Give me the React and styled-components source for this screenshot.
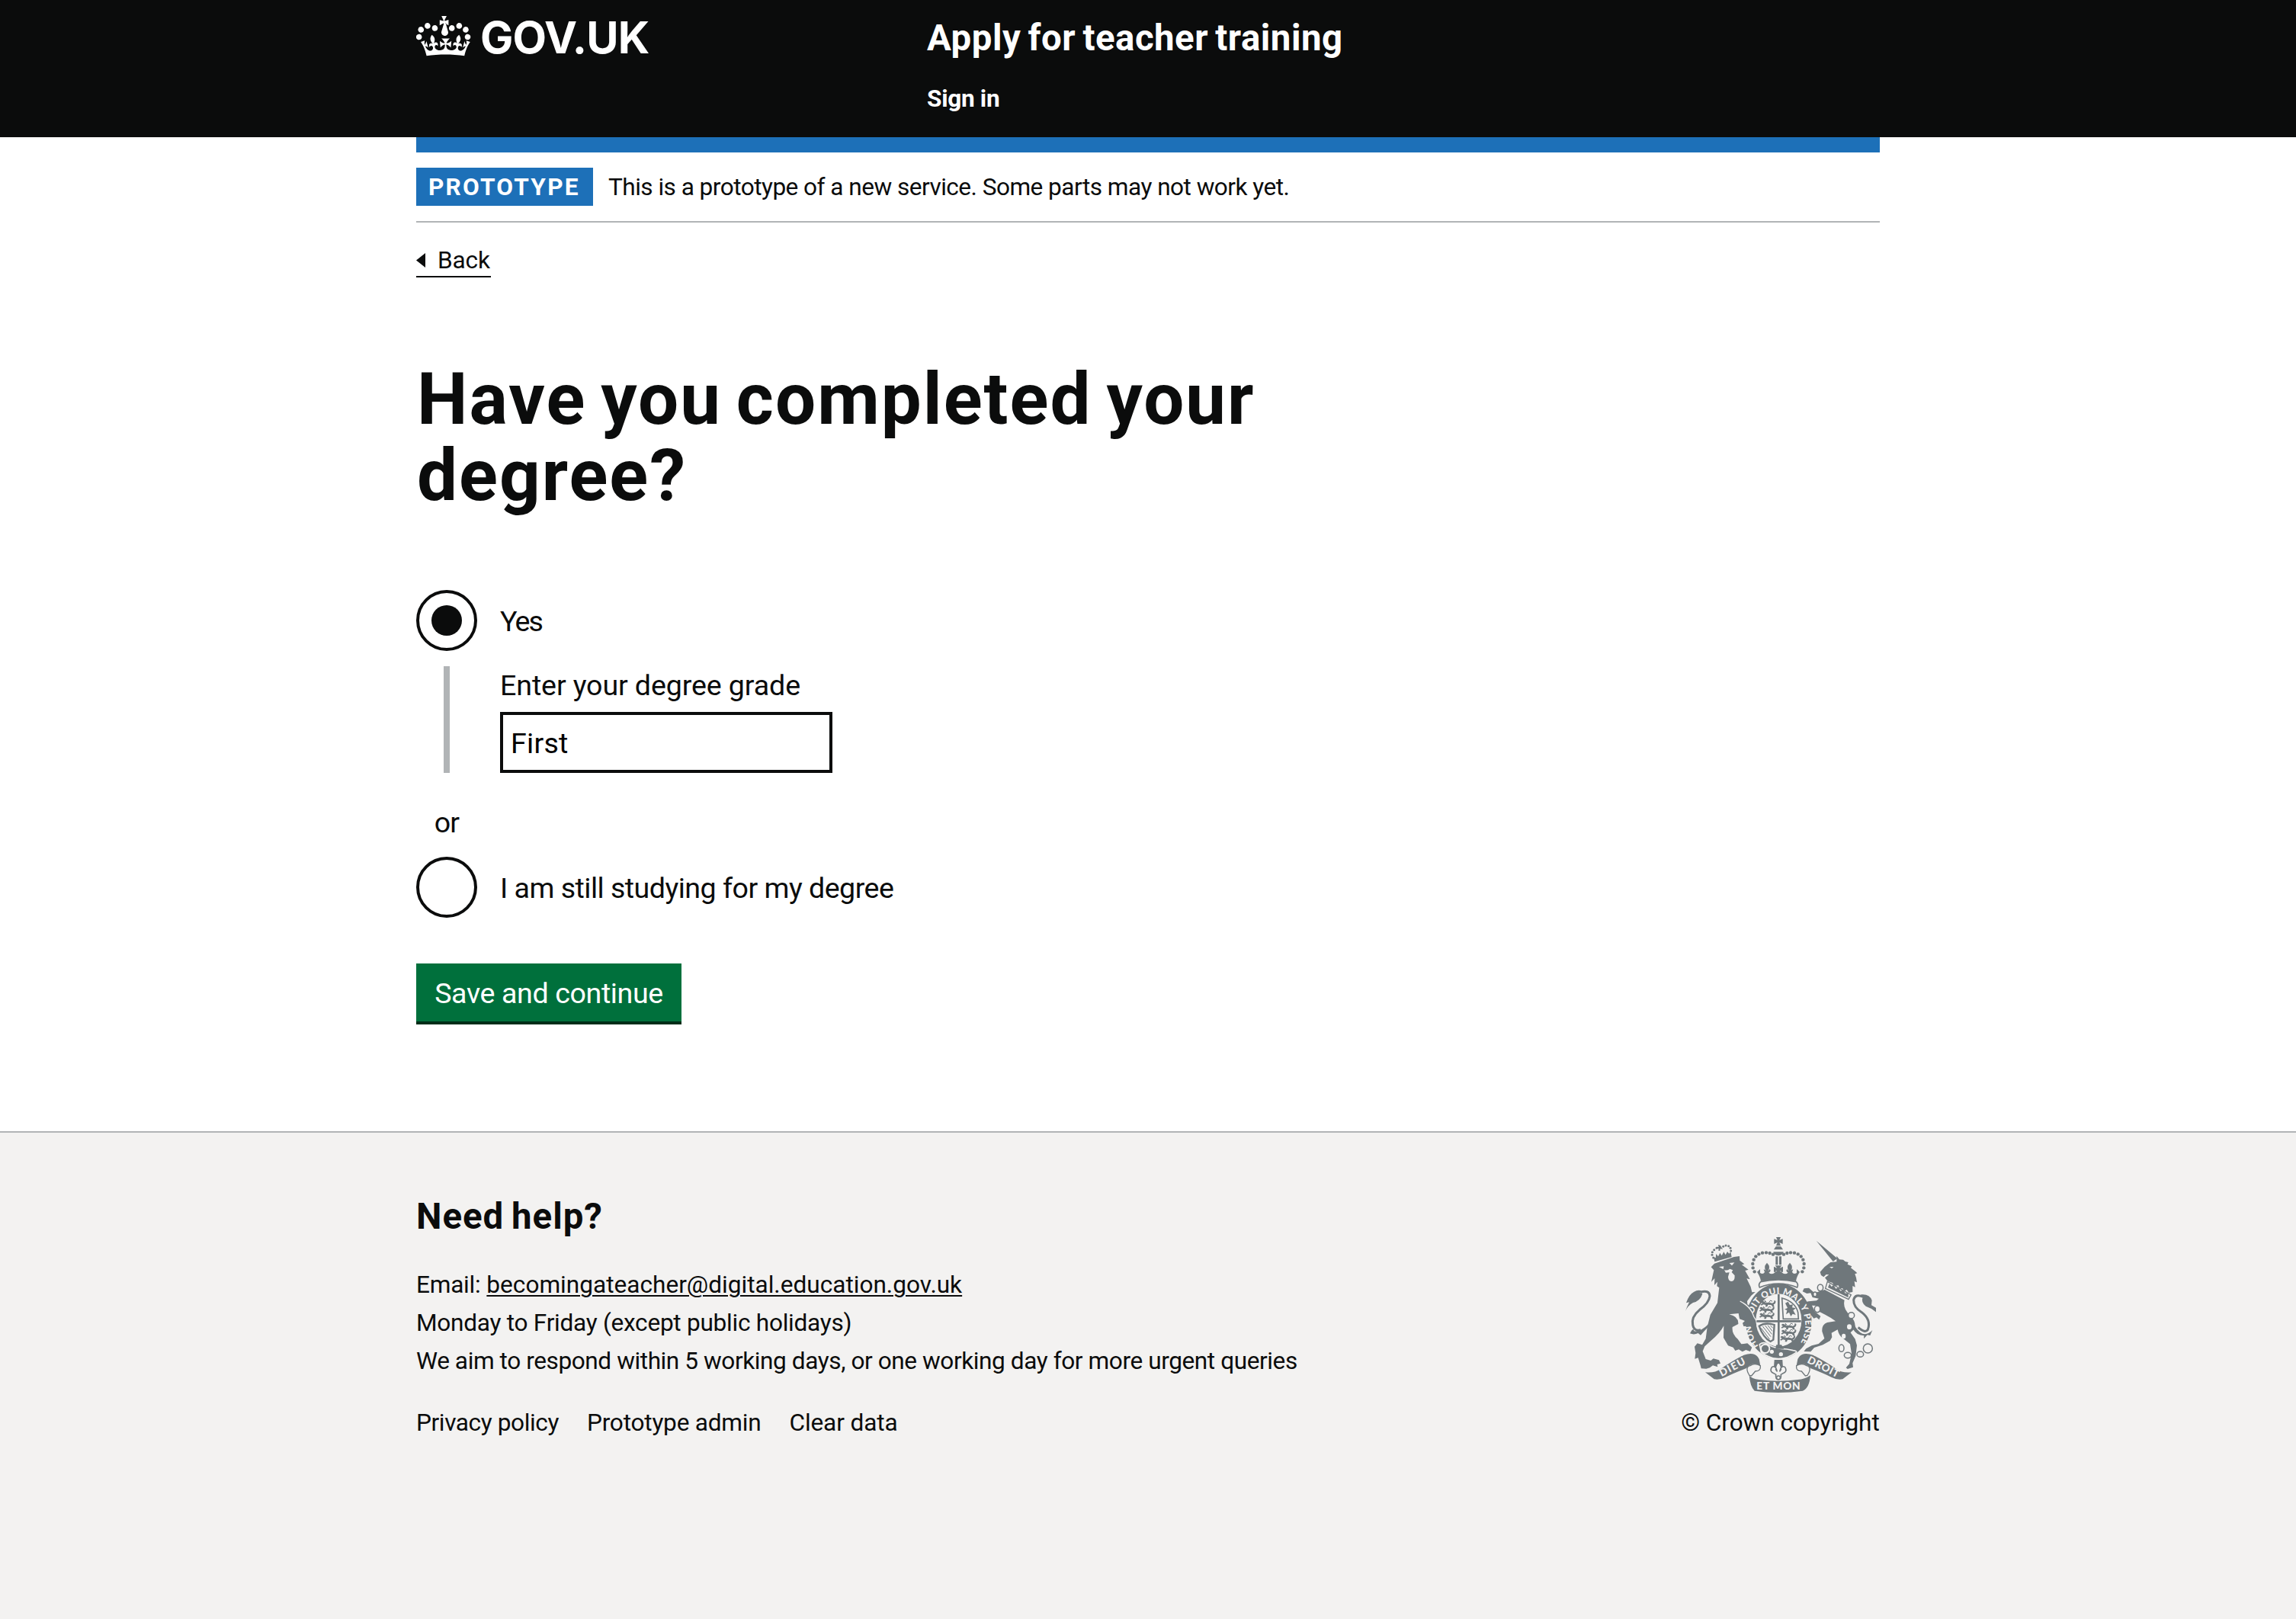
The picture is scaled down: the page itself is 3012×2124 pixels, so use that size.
import React from "react";
import styled, { createGlobalStyle } from "styled-components";

const ink = "#0b0c0c";
const blue = "#1d70b8";
const midGrey = "#b1b4b6";
const lightGrey = "#f3f2f1";
const crestGrey = "#6f777b";

const GlobalStyle = createGlobalStyle`
  *, *::before, *::after { box-sizing: border-box; }
  body {
    margin: 0;
    background: ${lightGrey};
    color: ${ink};
    font-family: Roboto, "Liberation Sans", sans-serif;
    -webkit-font-smoothing: antialiased;
  }
`;

const Page = styled.div`
  display: flex;
  flex-direction: column;
  min-height: 2124px;
  background: #fff;
`;

const Container = styled.div`
  width: 1920px;
  margin: 0 auto;
`;

const HeaderBar = styled.header`
  height: 180px;
  background: ${ink};
  color: #fff;
`;

const HeaderGrid = styled(Container)`
  display: grid;
  grid-template-columns: 670px 1fr;
  align-items: start;
`;

const Logo = styled.a`
  display: flex;
  align-items: flex-start;
  gap: 12px;
  padding-top: 21px;
`;

const LogoText = styled.span`
  margin-top: -2px;
  font: 700 57.8px/60px Inter, sans-serif;
  letter-spacing: -0.014em;
`;

const ServiceColumn = styled.div`
  display: flex;
  flex-direction: column;
  align-items: flex-start;
  gap: 34px;
  padding-top: 25px;
`;

const ServiceName = styled.a`
  font-size: 47.4px;
  line-height: 50px;
  font-weight: 700;
  letter-spacing: 0.0105em;
  word-spacing: -3px;
`;

const NavLink = styled.a`
  font-size: 31.6px;
  line-height: 41px;
  font-weight: 700;
  letter-spacing: -0.01em;
`;

const BlueBar = styled.div`
  height: 20px;
  background: ${blue};
`;

const PhaseBanner = styled.div`
  display: flex;
  gap: 20px;
  height: 92px;
  padding: 20px 0;
  border-bottom: 2px solid ${midGrey};
`;

const Tag = styled.strong`
  width: 232px;
  height: 50px;
  padding-left: 16px;
  background: ${blue};
  color: #fff;
  font-size: 31.6px;
  line-height: 51px;
  letter-spacing: 0.07em;
`;

const BodyText = styled.span`
  margin-bottom: -1px;
  font-size: 31.6px;
  line-height: 51px;
  white-space: nowrap;
  letter-spacing: ${(p) => p.$track || 0}em;
`;

const BackLink = styled.a`
  display: flex;
  align-items: center;
  gap: 16px;
  width: 98px;
  height: 43px;
  margin-top: 29px;
  border-bottom: 2px solid ${ink};
  font-size: 31.6px;
  line-height: 41px;
  letter-spacing: -0.005em;
  white-space: nowrap;
`;

const BackArrow = styled.span`
  width: 12px;
  height: 19px;
  background: ${ink};
  clip-path: polygon(0 50%, 100% 0, 100% 100%);
`;

const Main = styled.main`
  padding: 110px 0 140px;
`;

const Title = styled.h1`
  width: 1280px;
  margin: 0 0 100px;
  padding-left: 1px;
  font-size: 94.2px;
  line-height: 100px;
  font-weight: 700;
  letter-spacing: 0.0215em;
  word-spacing: -6.5px;
`;

const RadioRow = styled.label`
  display: flex;
  align-items: center;
  gap: 30px;
  height: 80px;
`;

const RadioCircle = styled.span`
  display: grid;
  place-items: center;
  width: 80px;
  height: 80px;
  border: 4px solid ${ink};
  border-radius: 50%;

  &::after {
    content: "";
    width: 40px;
    height: 40px;
    border-radius: 50%;
    background: ${(p) => (p.$checked ? ink : "transparent")};
  }
`;

const LabelText = styled.span`
  padding-top: 2px;
  font-size: 37.6px;
  line-height: 50px;
  letter-spacing: ${(p) => p.$track || 0}em;
`;

const Conditional = styled.div`
  display: flex;
  flex-direction: column;
  gap: 10px;
  height: 140px;
  margin: 20px 0 40px 36px;
  padding-left: 66px;
  border-left: 8px solid ${midGrey};
`;

const FieldLabel = styled.label`
  font-size: 37.6px;
  line-height: 50px;
  letter-spacing: -0.003em;
`;

const TextInput = styled.input`
  width: 436px;
  height: 80px;
  padding: 2px 10px 0;
  border: 4px solid ${ink};
  border-radius: 0;
  background: #fff;
  color: #000;
  font: 400 37.6px Roboto, sans-serif;
  letter-spacing: 0.007em;
`;

const Divider = styled.div`
  width: 80px;
  margin-bottom: 20px;
  font-size: 37.6px;
  line-height: 50px;
  text-align: center;
  letter-spacing: -0.02em;
`;

const SaveButton = styled.button`
  display: block;
  width: 348px;
  height: 76px;
  margin: 60px 0 4px;
  padding: 2px 0 0;
  border: 0;
  background: #00703c;
  box-shadow: 0 4px 0 #002d18;
  color: #fff;
  font: 400 37.6px Roboto, sans-serif;
  letter-spacing: -0.01em;
`;

const Footer = styled.footer`
  flex: 1;
  padding-top: 85px;
  border-top: 2px solid ${midGrey};
  background: ${lightGrey};
`;

const FooterRow = styled(Container)`
  display: flex;
  justify-content: space-between;
  align-items: flex-end;
`;

const HelpColumn = styled.div`
  display: flex;
  flex-direction: column;
`;

const HelpTitle = styled.h2`
  margin: 0 0 39px;
  font-size: 47.4px;
  line-height: 50px;
  letter-spacing: 0.021em;
  word-spacing: -3px;
`;

const EmailLine = styled.div`
  display: flex;
  gap: 8px;
  height: 50px;
`;

const EmailLink = styled.a`
  font-size: 31.6px;
  line-height: 51px;
  text-decoration: underline;
  text-decoration-thickness: 2px;
  text-underline-offset: 3px;
`;

const FooterLinks = styled.nav`
  display: flex;
  gap: 37px;
  height: 50px;
  margin-top: 31px;
`;

const CrestColumn = styled.div`
  display: flex;
  flex-direction: column;
  align-items: center;
  gap: 14px;
  width: 261px;
`;

function CrownIcon() {
  return (
    <svg width="72" height="54" viewBox="0 4 36 27" fill="#fff">
      <path
        fillRule="evenodd"
        d="M6.7 12.2c1 .4 2.1-.1 2.5-1s-.1-2.1-1-2.5c-1-.4-2.1.1-2.5 1-.4 1 0 2.1 1 2.5m-4.3 2.5c1 .4 2.1-.1 2.5-1s-.1-2.1-1-2.5c-1-.4-2.1.1-2.5 1-.5 1 0 2.1 1 2.5m-1.3 4.8c1 .4 2.1-.1 2.5-1 .4-1-.1-2.1-1-2.5-1-.4-2.1.1-2.5 1-.4 1 0 2.1 1 2.5m10.4-5.8c1 .4 2.1-.1 2.5-1s-.1-2.1-1-2.5c-1-.4-2.1.1-2.5 1s0 2.1 1 2.5m17.4-1.5c-1 .4-2.1-.1-2.5-1s.1-2.1 1-2.5c1-.4 2.1.1 2.5 1 .5 1 0 2.1-1 2.5m4.3 2.5c-1 .4-2.1-.1-2.5-1s.1-2.1 1-2.5c1-.4 2.1.1 2.5 1 .5 1 0 2.1-1 2.5m1.3 4.8c-1 .4-2.1-.1-2.5-1-.4-1 .1-2.1 1-2.5 1-.4 2.1.1 2.5 1 .4 1 0 2.1-1 2.5m-10.4-5.8c-1 .4-2.1-.1-2.5-1s.1-2.1 1-2.5c1-.4 2.1.1 2.5 1s0 2.1-1 2.5m-5.3-4.9 2.4 1.3V6.5l-2.4.8c-.1-.1-.1-.2-.2-.3s1.4-3 1.4-3h-3.4s1.3 2.9 1.4 3-.2.2-.2.3l-2.4-.7v3.5l2.4-1.3c.1.1.2.2.3.3l-1.5 5v.1c-.1.2-.1.4-.1.6 0 1.1.8 2 1.9 2.2h.7c1-.2 1.9-1.1 1.9-2.1 0-.2 0-.4-.1-.6v-.1l-1.4-5c.1-.2.2-.3.3-.3m-1 20.3c4.6 0 8.9.3 12.8.9 1.1-4.6 2.4-7.2 3.8-9.1l-2.6-.9c.3 1.3.3 1.9 0 2.8-.4-.4-.8-1.2-1.1-2.4l-1.2 4.2c.8-.5 1.4-.9 2-.9-1.2 2.6-2.7 3.2-3.6 3-1.2-.2-1.7-1.3-1.5-2.2.3-1.3 1.6-1.6 2.2-.1 1.2-2.4-.8-3.1-2.1-2.4 1.9-1.9 2.2-3.6.6-5.7-2.2 1.7-2.2 3.3-1.2 5.6-1.3-1.5-3.3-.7-2.5 1.7.9-1.4 2.1-.5 2 .8-.2 1.2-1.7 2.1-3.7 2-2.8-.2-3-2.2-3-3.7.7-.1 1.9.5 3 2l.4-4.4c-1.1 1.1-2.2 1.4-3.3 1.4.4-1.2 2.2-3 2.2-3h-5.4s1.8 1.8 2.2 3c-1.1 0-2.2-.3-3.3-1.4l.4 4.4c1.1-1.5 2.3-2.1 3-2-.1 1.6-.2 3.5-3 3.7-1.9.2-3.5-.8-3.7-2-.2-1.3 1-2.2 1.9-.8.7-2.4-1.3-3.1-2.6-1.7 1-2.3 1-4-1.2-5.6-1.6 2.1-1.3 3.8.6 5.7-1.3-.7-3.3 0-2.1 2.4.6-1.5 1.9-1.1 2.2.1.2.9-.4 1.9-1.5 2.2-1 .2-2.5-.5-3.6-3 .6 0 1.2.4 2 .9l-1.2-4.2c-.3 1.1-.7 1.9-1.1 2.4-.3-.9-.2-1.4 0-2.8l-2.6.9c1.4 1.9 2.7 4.5 3.8 9.1 3.9-.6 8.2-.9 12.8-.9"
      />
    </svg>
  );
}

const crownPearls = [
  [362, 202], [356, 187], [355, 171], [359, 155], [367, 142], [379, 133], [393, 128], [408, 127], [422, 129], [435, 134],
];
const smallPearls = [[200, 147], [195, 136], [196, 125], [203, 116], [213, 109], [239, 103], [249, 99], [260, 101], [267, 109], [269, 120]];

function Passant({ x, y }) {
  return (
    <g transform={`translate(${x} ${y})`}>
      <path d="M2 4Q6-3 13 1L20 7Q34 3 46 8Q56 6 54-3L60-1Q62 9 52 13L55 22H48L43 15L30 14L27 22H20L21 15L12 13L4 17L1 13L8 9Z" />
      <path d="M20 7L17-2L24 4M34 5L40-3L47 1" fill="none" stroke={crestGrey} strokeWidth="3" />
    </g>
  );
}

function CrownHalf() {
  return (
    <g>
      {crownPearls.map(([x, y]) => <circle key={`${x}-${y}`} cx={x} cy={y} r="6.6" />)}
      <path d="M372 203L384 192L384 207Q396 214 402 204L398 193Q405 194 408 200Q395 184 411 167Q428 184 414 200L422 192Q429 200 418 206Q431 216 443 205L440 200L456 204V238Q410 234 387 240Q385 222 372 203Z" />
    </g>
  );
}

function RoyalArms() {
  return (
    <svg width="250" height="204" viewBox="90 66 750 612" fill={crestGrey}>
      <defs>
        <path id="garter" d="M382 499A106 122 0 1 1 530 499" />
      </defs>

      {/* Crown */}
      <CrownHalf />
      <g transform="translate(912 0) scale(-1 1)"><CrownHalf /></g>
      <path d="M447 66H465L460 78L473 73V93L460 87L465 100H447L452 87L439 93V73L452 78Z" />
      <path d="M446 103H466L474 115H438Z" />
      <path d="M436 124H476Q474 138 456 139Q438 138 436 124Z" />
      <path d="M445 142H454V175H445ZM459 142H468V175H459Z" />
      <path d="M443 178H469L461 188L474 182V204L462 198L466 206H446L450 198L438 204V182L451 188Z" />
      <path d="M386 242Q456 225 526 242Q536 252 530 264Q456 234 382 264Q376 252 386 242Z" fill={lightGrey} stroke={crestGrey} strokeWidth="5" />

      {/* Lion */}
      <path d="M108 445Q122 418 124 436Q150 440 184 405L176 424Q160 440 150 452L140 444Q124 452 108 445Z" />
      <path d="M148 283Q184 272 186 298Q183 325 146 352Q112 380 119 412Q124 438 150 431" fill="none" stroke={crestGrey} strokeWidth="9" />
      <path d="M90 357Q97 338 105 322L93 325Q103 292 124 281Q140 272 155 278L146 286Q160 285 156 292Q148 318 120 324Q100 335 90 357Z" />
      <path d="M191 184L204 170L281 144L303 141L304 158L322 172L312 175L338 194L325 198L344 232L331 229L347 262L352 283L365 282L349 296L333 318L334 330L354 349L358 378L369 408L357 422L346 414L341 428L332 415L319 417L315 404L324 396L303 388L299 366L262 370Q300 378 298 408L275 420Q272 447 296 467L310 487L334 484L352 500L345 516L328 510L314 517L300 508L286 513L278 500L258 493L240 462L241 415Q226 445 190 474L166 496L158 515L170 546L190 552L200 544L222 550L228 563L215 567L217 577L198 571L186 580L172 584L152 583L149 570L140 541L127 545L130 522L126 497L137 484L156 490L170 466L176 420L188 372L216 325L223 265L214 259L216 242L204 255L205 228L192 242L197 218L202 196Z" />
      <path d="M222 183L241 181L239 192ZM263 168L283 166L273 178ZM243 196Q255 199 265 191L277 196L272 204L284 217Q285 240 271 240Q258 239 258 222L263 205L249 206Z" fill={lightGrey} />
      {smallPearls.map(([x, y]) => <circle key={`${x}-${y}`} cx={x} cy={y} r="4.5" />)}
      <path d="M201 144L209 148L211 132L219 142L226 128L233 139L241 124L248 136L255 123L262 131L268 124L272 144L205 163Z" />
      <path d="M219 96L228 99L232 106L237 113L227 112L226 120L220 119L221 112L213 110L213 104L221 105Z" />

      {/* Unicorn */}
      <path d="M605 80L688 150L671 162Z" />
      <path d="M685 140L696 154L711 155L719 162L731 165L728 173L745 181L741 187L760 202L766 208L757 211L762 226L765 244L755 240L758 263L748 258L748 282L733 285L725 273L715 280L708 267L697 269L692 256L676 259L669 246L650 240L639 226Q645 221 655 214L644 213L634 223L624 216L620 203L638 183L661 165L685 163Z" />
      <path d="M657 184L673 183L666 189Z" fill={lightGrey} />
      <path d="M649 241L742 293L732 311L641 268Z" fill={lightGrey} stroke={crestGrey} strokeWidth="4" />
      <path d="M651 264L657 249L665 261L673 254L682 269L692 264L701 278L711 272L719 287L731 286L731 304Z" />
      <path d="M638 273L716 314Q708 348 739 374Q762 399 757 425L740 442L758 467L765 492L760 534L748 562L750 578L728 585L722 580L735 565L744 525L738 487L711 465Q694 455 689 430L665 443L667 460L659 474L631 490L597 501L583 517L556 516L565 505L587 493L614 486L637 465L628 437Q626 410 648 402L681 397Q662 382 640 371L618 360L612 336L588 335L600 360L622 377L616 391L606 382L595 386L580 367L575 348L563 337L550 346L554 323L575 319L606 316L615 308L590 303L583 286L568 288L551 280L557 268L576 266L598 286L620 279Z" />
      {[[621, 265, 11, 13], [600, 291, 7, 9], [609, 349, 11, 13], [743, 374, 12, 12], [704, 503, 10, 14], [729, 531, 14, 11], [778, 527, 13, 11], [808, 504, 18, 18]].map(([x, y, rx, ry]) => (
        <ellipse key={x} cx={x} cy={y} rx={rx} ry={ry} fill={lightGrey} stroke={crestGrey} strokeWidth="4.5" />
      ))}
      <ellipse cx="735" cy="419" rx="9" ry="10" fill={lightGrey} />
      <ellipse cx="713" cy="456" rx="8" ry="10" fill={lightGrey} />
      <path d="M790 301Q758 287 752 313Q751 342 784 362Q822 392 808 430Q798 446 770 421" fill="none" stroke={crestGrey} strokeWidth="9" />
      <path d="M780 292Q815 288 824 315L822 334L840 344V361Q820 344 800 338Q780 322 788 302Z" />
      <path d="M752 404Q764 435 787 446Q808 452 826 432L817 453L806 451L792 466L793 454Q762 452 748 425Z" />

      {/* Garter and shield */}
      <ellipse cx="457" cy="397" rx="130" ry="148" />
      <ellipse cx="457" cy="393" rx="90" ry="104" fill={lightGrey} />
      <text fill={lightGrey} fontFamily="Lato, sans-serif" fontSize="35" fontWeight="900">
        <textPath href="#garter" startOffset="6" textLength="520" lengthAdjust="spacing">HONI SOIT QUI MAL Y PENSE</textPath>
      </text>
      <path d="M332 322L331 332L350 350L360 392L370 412L352 426L344 414L322 417L326 372Z" />
      <path d="M305 318Q338 335 352 361Q359 383 372 399" fill="none" stroke={lightGrey} strokeWidth="4" />
      <path d="M370 393H545V401H370ZM453 291H461V498H453Z" />
      <Passant x={385} y={318} />
      <Passant x={380} y={342} />
      <Passant x={380} y={366} />
      <Passant x={466} y={408} />
      <Passant x={466} y={432} />
      <Passant x={462} y={456} />
      <path d="M470 306L475 388H535L533 362Q522 320 470 306Z" fill="none" stroke={crestGrey} strokeWidth="5" />
      <path d="M483 326L494 320L501 333L513 331L510 343L525 346L514 354L524 372L512 368L505 378L498 362L486 370L490 354L480 350L492 345Z" />
      <path d="M380 416Q405 400 440 411L436 470L425 477Q396 462 380 416Z" fill="none" stroke={crestGrey} strokeWidth="7" />
      <path d="M394 417L426 458M404 414L430 448M414 413L432 436M388 424L421 468M424 413L434 424" stroke={crestGrey} strokeWidth="3" />
      <path d="M382 488Q400 475 420 491Q440 505 490 507L514 512Q530 514 526 520Q490 545 456 545Q420 544 388 519Z" stroke={lightGrey} strokeWidth="5" />
      <circle cx="404" cy="505" r="17" fill="none" stroke={lightGrey} strokeWidth="6" />
      <circle cx="430" cy="517" r="8" fill={lightGrey} />
      <circle cx="466" cy="527" r="8" fill={lightGrey} />
      <path d="M448 490H468L478 506H444Z" />

      {/* Scroll */}
      <path d="M440 549H472L474 580H438Z" />
      <path d="M456 558Q475 577 461 595Q467 568 482 578Q493 595 474 602L466 607Q468 627 456 627Q444 627 446 607L438 602Q419 595 430 578Q445 568 451 595Q437 577 456 558Z" fill={lightGrey} stroke={crestGrey} strokeWidth="5" />
      <circle cx="456" cy="619" r="7" fill={lightGrey} stroke={crestGrey} strokeWidth="4" />
      <path d="M168 598Q205 602 228 585Q276 552 320 530Q365 514 380 546L385 572Q352 555 330 582Q280 601 248 617Q222 630 203 625Z" />
      <path d="M744 598Q707 602 684 585Q636 552 592 530Q547 514 532 546L527 572Q560 555 582 582Q632 601 664 617Q690 630 709 625Z" />
      <path d="M385 572Q388 594 365 594L350 612L342 610Q322 578 345 572Q362 560 385 572ZM527 572Q524 594 547 594L562 612L570 610Q590 578 567 572Q550 560 527 572Z" fill={lightGrey} stroke={crestGrey} strokeWidth="4" />
      <path d="M341 610Q350 624 380 627Q456 638 532 627Q560 626 582 610Q578 660 552 671Q456 685 362 671Q345 655 341 610Z" />
      <g fill={lightGrey} fontFamily="Lato, sans-serif" fontSize="41" fontWeight="900" textAnchor="middle">
        <text transform="translate(281 590) rotate(-28)" textLength="110">DIEU</text>
        <text transform="translate(627 589) rotate(27)" textLength="134">DROIT</text>
        <text x="456" y="667" textLength="172">ET MON</text>
      </g>
    </svg>
  );
}

export default function App() {
  return (
    <Page>
      <GlobalStyle />
      <HeaderBar>
        <HeaderGrid>
          <Logo>
            <CrownIcon />
            <LogoText>GOV.UK</LogoText>
          </Logo>
          <ServiceColumn>
            <ServiceName>Apply for teacher training</ServiceName>
            <NavLink>Sign in</NavLink>
          </ServiceColumn>
        </HeaderGrid>
      </HeaderBar>
      <Container>
        <BlueBar />
        <PhaseBanner>
          <Tag>PROTOTYPE</Tag>
          <BodyText $track={-0.0168}>This is a prototype of a new service. Some parts may not work yet.</BodyText>
        </PhaseBanner>
        <BackLink>
          <BackArrow />
          Back
        </BackLink>
        <Main>
          <Title>Have you completed your degree?</Title>
          <RadioRow>
            <RadioCircle $checked />
            <LabelText $track={-0.05}>Yes</LabelText>
          </RadioRow>
          <Conditional>
            <FieldLabel htmlFor="grade">Enter your degree grade</FieldLabel>
            <TextInput id="grade" defaultValue="First" />
          </Conditional>
          <Divider>or</Divider>
          <RadioRow>
            <RadioCircle />
            <LabelText $track={-0.0138}>I am still studying for my degree</LabelText>
          </RadioRow>
          <SaveButton>Save and continue</SaveButton>
        </Main>
      </Container>
      <Footer>
        <FooterRow>
          <HelpColumn>
            <HelpTitle>Need help?</HelpTitle>
            <EmailLine>
              <BodyText $track={-0.008}>Email:</BodyText>
              <EmailLink>becomingateacher@digital.education.gov.uk</EmailLink>
            </EmailLine>
            <BodyText $track={-0.0084}>Monday to Friday (except public holidays)</BodyText>
            <BodyText $track={-0.0134}>We aim to respond within 5 working days, or one working day for more urgent queries</BodyText>
            <FooterLinks>
              <BodyText $track={-0.0125}>Privacy policy</BodyText>
              <BodyText $track={-0.007}>Prototype admin</BodyText>
              <BodyText $track={-0.0042}>Clear data</BodyText>
            </FooterLinks>
          </HelpColumn>
          <CrestColumn>
            <RoyalArms />
            <BodyText $track={-0.0024}>© Crown copyright</BodyText>
          </CrestColumn>
        </FooterRow>
      </Footer>
    </Page>
  );
}
